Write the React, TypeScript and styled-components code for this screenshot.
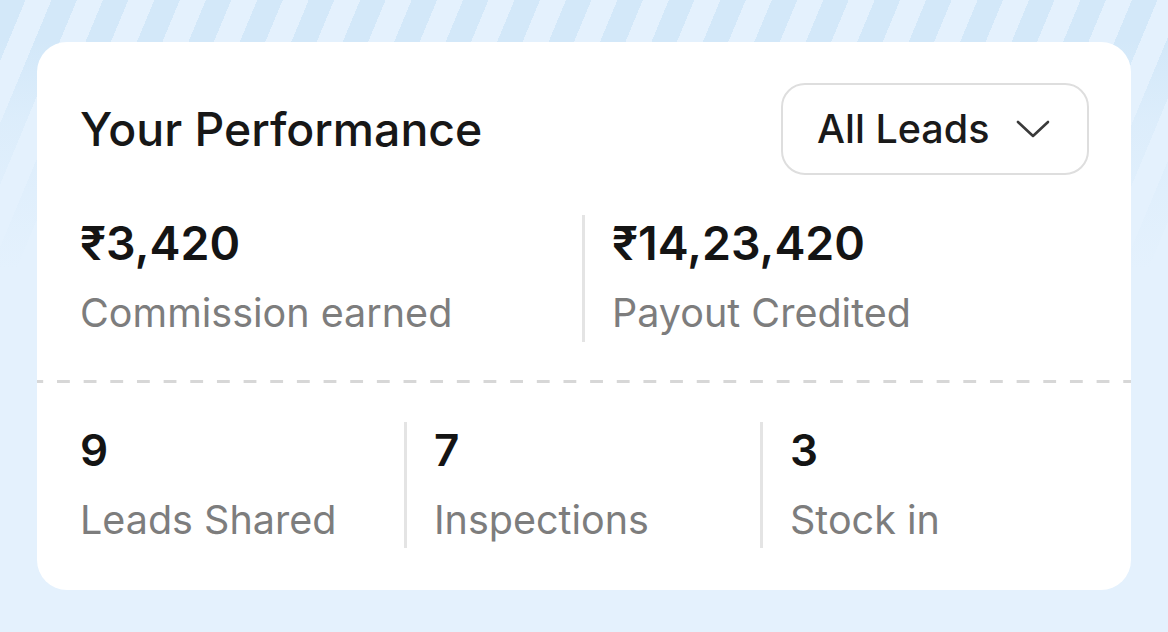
import styled, { createGlobalStyle } from "styled-components";

const GlobalStyle = createGlobalStyle`
  html, body {
    margin: 0;
    padding: 0;
  }
  body {
    font-family: Inter, "Noto Sans", "Liberation Sans", sans-serif;
    color: #161616;
  }
`;

const Page = styled.div`
  width: 1168px;
  height: 632px;
  box-sizing: border-box;
  padding: 42px 37px;
  background-color: #e4f1fd;
  background-image: linear-gradient(
      to bottom,
      rgba(228, 241, 253, 0) 0px,
      rgba(228, 241, 253, 0) 40px,
      rgba(228, 241, 253, 0.55) 120px,
      #e4f1fd 270px
    ),
    repeating-linear-gradient(
      112.6deg,
      #d3e8f9 0px,
      #d3e8f9 23.5px,
      #e4f1fd 23.5px,
      #e4f1fd 47.5px
    );
`;

const Card = styled.div`
  height: 548px;
  box-sizing: border-box;
  background: #ffffff;
  border-radius: 30px;
  padding: 41px 0 0;
  display: flex;
  flex-direction: column;

  & > * {
    flex-shrink: 0;
  }
`;

const Header = styled.div`
  display: flex;
  align-items: center;
  justify-content: space-between;
  padding: 0 42px 0 43px;
`;

const Title = styled.h2`
  margin: 0;
  font-size: 46.4px;
  font-weight: 500;
  line-height: 56px;
  color: #171717;
`;

const Dropdown = styled.button`
  width: 308px;
  height: 92px;
  box-sizing: border-box;
  display: flex;
  align-items: center;
  gap: 26px;
  padding: 0 0 0 34px;
  background: #fff;
  border: 2px solid #dedede;
  border-radius: 24px;
  font-family: inherit;
  font-size: 39.5px;
  font-weight: 500;
  color: #1a1a1a;
  cursor: pointer;
`;

const StatRow = styled.div<{ cols: string; top?: number }>`
  display: grid;
  grid-template-columns: ${(p) => p.cols};
  padding: 0 42px 0 43px;
  margin-top: ${(p) => p.top ?? 0}px;
`;

const Stat = styled.div<{ divided?: boolean; pad: number; h: number }>`
  height: ${(p) => p.h}px;
  box-sizing: border-box;
  display: flex;
  flex-direction: column;
  gap: 14px;
  padding-left: ${(p) => p.pad}px;
  border-left: ${(p) => (p.divided ? "3px solid #e4e4e4" : "none")};
`;

const Value = styled.div<{ small?: boolean }>`
  font-size: ${(p) => (p.small ? 44 : 46.5)}px;
  font-weight: 600;
  line-height: 56px;
  color: #141414;
`;

const Label = styled.div`
  font-size: 39.5px;
  font-weight: 400;
  line-height: 56px;
  color: #7d7d7d;
  white-space: nowrap;
`;

const Dashed = styled.div`
  height: 3px;
  margin: 38px 0 39px;
  background-image: linear-gradient(
    to right,
    #d7d7d7 0,
    #d7d7d7 13.3px,
    transparent 13.3px,
    transparent 26.67px
  );
  background-size: 26.67px 3px;
  background-position: 20px 0;
  background-repeat: repeat-x;
`;

const Chevron = () => (
  <svg width="34" height="20" viewBox="0 0 34 20" fill="none">
    <polyline
      points="2,3 17,17 32,3"
      stroke="#3a3a3a"
      strokeWidth="2.6"
      strokeLinecap="round"
      strokeLinejoin="round"
    />
  </svg>
);

const topStats = [
  { value: "₹3,420", label: "Commission earned" },
  { value: "₹14,23,420", label: "Payout Credited" },
];

const bottomStats = [
  { value: "9", label: "Leads Shared" },
  { value: "7", label: "Inspections" },
  { value: "3", label: "Stock in" },
];

export default function App() {
  return (
    <>
      <GlobalStyle />
      <Page>
        <Card>
          <Header>
            <Title>Your Performance</Title>
            <Dropdown>
              All Leads
              <Chevron />
            </Dropdown>
          </Header>
          <StatRow cols="502px 1fr" top={40}>
            {topStats.map((s, i) => (
              <Stat key={s.label} divided={i > 0} pad={i > 0 ? 27 : 0} h={127}>
                <Value>{s.value}</Value>
                <Label>{s.label}</Label>
              </Stat>
            ))}
          </StatRow>
          <Dashed />
          <StatRow cols="324px 356px 1fr">
            {bottomStats.map((s, i) => (
              <Stat key={s.label} divided={i > 0} pad={i > 0 ? 27 : 0} h={126}>
                <Value small>{s.value}</Value>
                <Label>{s.label}</Label>
              </Stat>
            ))}
          </StatRow>
        </Card>
      </Page>
    </>
  );
}
